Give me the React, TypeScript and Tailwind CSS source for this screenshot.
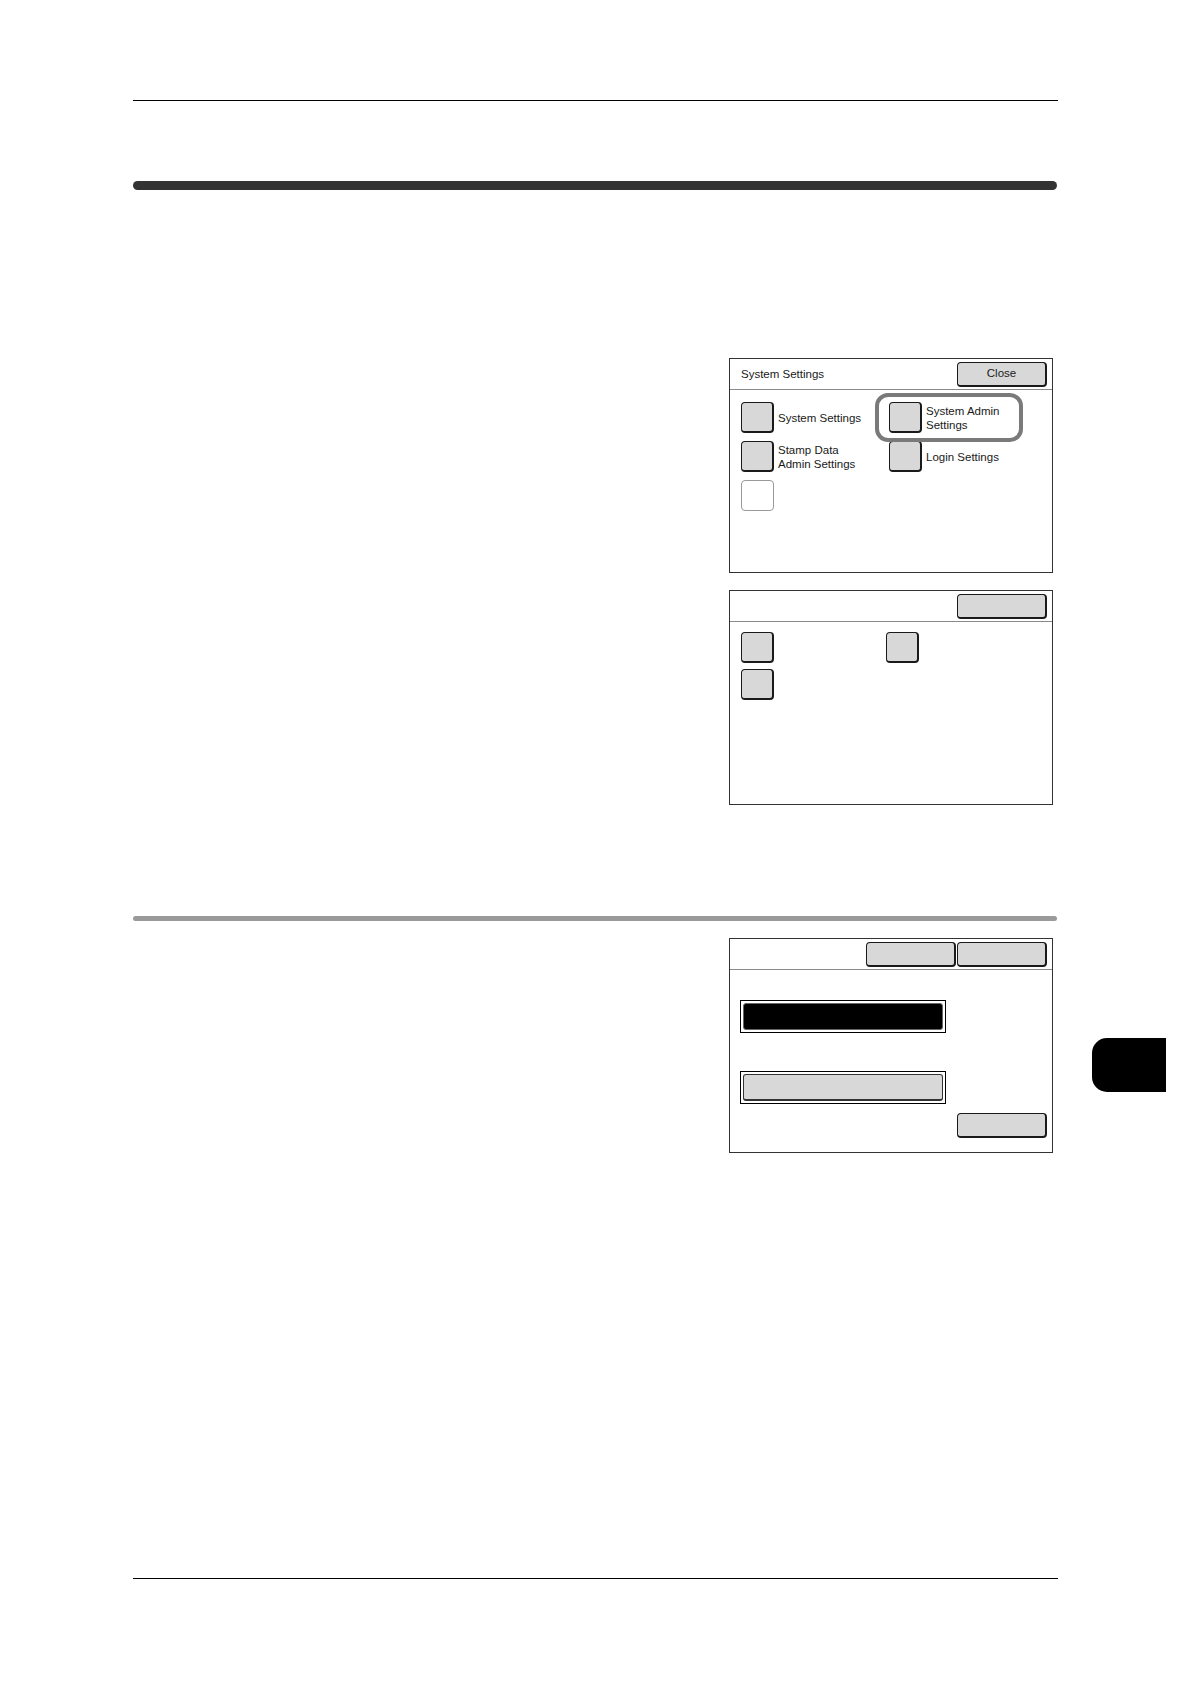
import React from 'react';

const font = "font-['Liberation_Sans','Arial',sans-serif]";

function WideButton({ label }: { label?: string }) {
  return (
    <div className="w-[90px] h-[25px] rounded-[4px] border border-[#1a1a1a] border-r-2 border-b-2 bg-[#d8d8d8] flex items-center justify-center text-[11.5px] text-[#1a1a1a]">
      {label}
    </div>
  );
}

function SquareButton({ blank = false }: { blank?: boolean }) {
  if (blank) {
    return <div className="w-[33px] h-[31px] rounded-[4px] border border-[#9a9a9a] bg-white shrink-0" />;
  }
  return (
    <div className="w-[33px] h-[31px] rounded-[4px] border border-[#1a1a1a] border-r-2 border-b-2 bg-[#d8d8d8] shrink-0" />
  );
}

function Option({ lines, blank }: { lines?: string[]; blank?: boolean }) {
  return (
    <div className="flex items-center gap-[4px] h-[31px]">
      <SquareButton blank={blank} />
      {lines && (
        <div className="text-[11.5px] leading-[14px] text-[#1a1a1a]">
          {lines.map((l) => (
            <div key={l}>{l}</div>
          ))}
        </div>
      )}
    </div>
  );
}

function Panel({ header, children }: { header: React.ReactNode; children: React.ReactNode }) {
  return (
    <div className="w-[324px] h-[215px] border border-[#333] bg-white flex flex-col">
      <div className="h-[31px] border-b border-[#8a8a8a] flex items-center justify-between pl-[11px] pr-[5px] shrink-0">
        {header}
      </div>
      <div className="flex-1">{children}</div>
    </div>
  );
}

export default function App() {
  return (
    <div className={`w-[1190px] min-h-[1684px] bg-white ${font} pl-[133px] flex flex-col`}>
      {/* header rule */}
      <div className="mt-[100px] w-[925px] h-px bg-black" />

      {/* chapter bar */}
      <div className="mt-[80px] w-[924px] h-[9px] rounded-full bg-[#333]" />

      {/* step 1 screens */}
      <div className="mt-[168px] w-[925px] pr-[5px] flex justify-end">
        <Panel
          header={
            <>
              <span className="text-[11.5px] text-[#1a1a1a] pt-[2px]">System Settings</span>
              <WideButton label="Close" />
            </>
          }
        >
          <div className="pl-[11px] pt-[12px] grid grid-cols-[148px_1fr] gap-y-[8px] gap-x-0">
            <Option lines={['System Settings']} />
            <div className="relative">
              <Option lines={['System Admin', 'Settings']} />
              <div className="absolute left-[-14px] top-[-9px] w-[148px] h-[49px] rounded-[13px] border-[4px] border-[#7a7a7a]" />
            </div>
            <Option lines={['Stamp Data', 'Admin Settings']} />
            <Option lines={['Login Settings']} />
            <Option blank />
          </div>
        </Panel>
      </div>

      <div className="mt-[17px] w-[925px] pr-[5px] flex justify-end">
        <Panel
          header={
            <>
              <span />
              <WideButton />
            </>
          }
        >
          <div className="pl-[11px] pt-[10px] grid grid-cols-[145px_1fr] gap-y-[6px]">
            <Option />
            <Option />
            <Option />
          </div>
        </Panel>
      </div>

      {/* section rule */}
      <div className="mt-[111px] w-[924px] h-[5px] rounded-full bg-[#9a9a9a]" />

      {/* step 2 screen + chapter tab */}
      <div className="mt-[17px] flex items-start">
        <div className="w-[925px] pr-[5px] flex justify-end">
          <Panel
            header={
              <>
                <span />
                <div className="flex gap-px">
                  <WideButton />
                  <WideButton />
                </div>
              </>
            }
          >
            <div className="flex flex-col pl-[10px] pr-[5px] pt-[30px]">
              <div className="w-[206px] h-[33px] border border-black p-[2px]">
                <div className="w-full h-full rounded-[3px] bg-black border border-[#666]" />
              </div>
              <div className="mt-[38px] w-[206px] h-[33px] border border-black p-[2px]">
                <div className="w-full h-full rounded-[3px] bg-[#d8d8d8] border border-[#333] border-b-2" />
              </div>
              <div className="mt-[9px] flex justify-end">
                <WideButton />
              </div>
            </div>
          </Panel>
        </div>
        <div className="ml-[34px] mt-[100px] w-[74px] h-[54px] rounded-l-[15px] bg-black" />
      </div>

      {/* footer rule */}
      <div className="mt-[425px] w-[925px] h-px bg-black" />
    </div>
  );
}
